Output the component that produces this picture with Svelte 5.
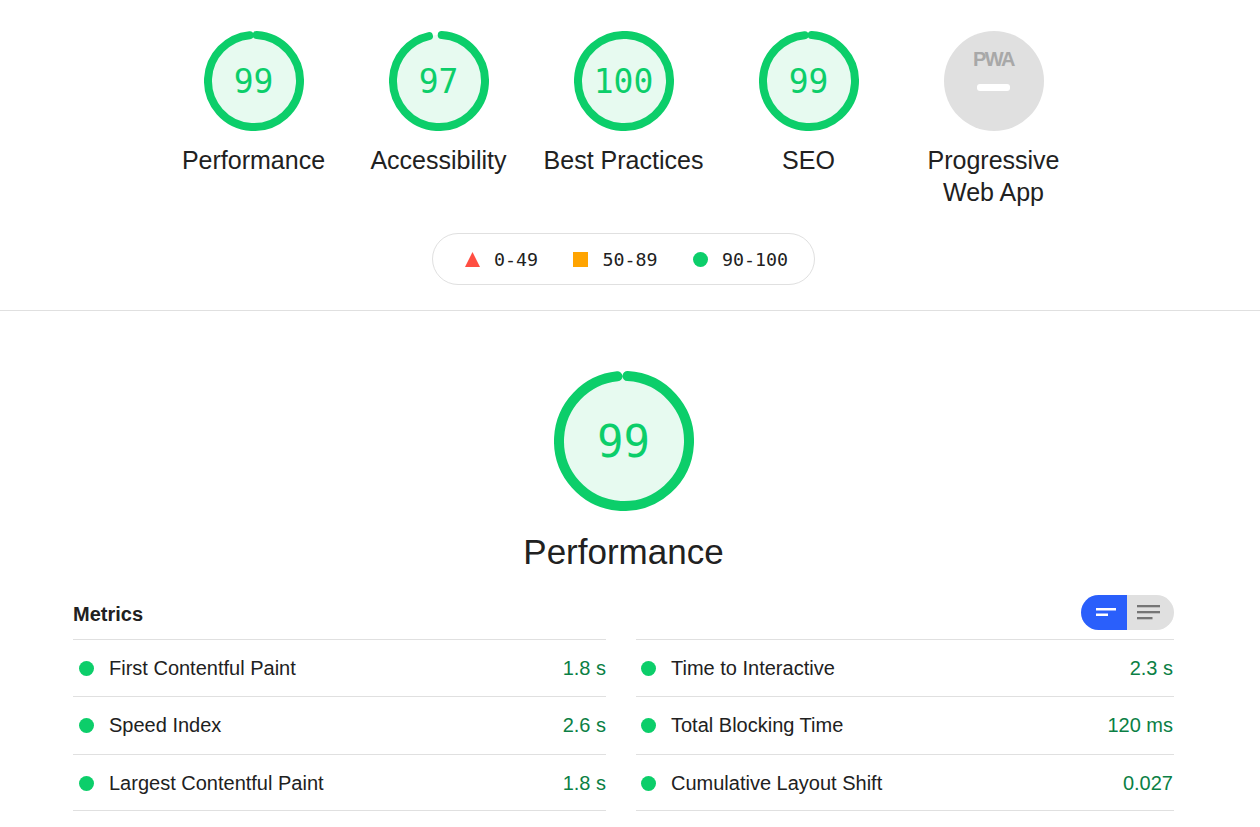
<script lang="ts">
  const cats = [
    { score: 99, label: "Performance" },
    { score: 97, label: "Accessibility" },
    { score: 100, label: "Best Practices" },
    { score: 99, label: "SEO" },
  ];
  const left = [
    { name: "First Contentful Paint", value: "1.8 s" },
    { name: "Speed Index", value: "2.6 s" },
    { name: "Largest Contentful Paint", value: "1.8 s" },
  ];
  const right = [
    { name: "Time to Interactive", value: "2.3 s" },
    { name: "Total Blocking Time", value: "120 ms" },
    { name: "Cumulative Layout Shift", value: "0.027" },
  ];

  // the round caps eat into the gap, so take their width off the dash.
  // at 99 the caps overlap a little and only a small notch stays
  function dash(score: number, r: number, stroke: number) {
    const len = 2 * Math.PI * r;
    if (score === 100) return `${len} 0`;
    const gap = Math.max(-1.5, (len * (100 - score)) / 100 - 3.3);
    return `${len - gap - stroke} ${len}`;
  }
</script>

<div class="page">
  <section class="summary">
    <div class="gauges">
      {#each cats as cat}
        <div class="gauge-item">
          <div class="gauge">
            <svg viewBox="0 0 100 100" width="100" height="100">
              <circle class="fill" cx="50" cy="50" r="46" />
              <circle
                class="arc"
                cx="50"
                cy="50"
                r="46"
                stroke-width="8"
                stroke-dasharray={dash(cat.score, 46, 8)}
                transform="rotate(-86.6 50 50)"
              />
            </svg>
            <span class="score">{cat.score}</span>
          </div>
          <div class="label">{cat.label}</div>
        </div>
      {/each}
      <div class="gauge-item">
        <div class="pwa">
          <span class="pwa-text">PWA</span>
          <span class="pwa-bar"></span>
        </div>
        <div class="label">Progressive<br />Web App</div>
      </div>
    </div>

    <div class="legend">
      <span class="legend-item">
        <svg width="15" height="15" viewBox="0 0 15 15"><polygon points="7.5,0 15,15 0,15" fill="#ff4e42" /></svg>
        0-49
      </span>
      <span class="legend-item">
        <span class="sq"></span>
        50-89
      </span>
      <span class="legend-item">
        <span class="dot"></span>
        90-100
      </span>
    </div>
  </section>

  <section class="detail">
    <div class="big-gauge">
      <svg viewBox="0 0 140 140" width="140" height="140">
        <circle class="fill" cx="70" cy="70" r="65" />
        <circle
          class="arc"
          cx="70"
          cy="70"
          r="65"
          stroke-width="10"
          stroke-dasharray={dash(99, 65, 10)}
          transform="rotate(-86.9 70 70)"
        />
      </svg>
      <span class="big-score">99</span>
    </div>
    <h2>Performance</h2>

    <div class="metrics-head">
      <span class="metrics-title">Metrics</span>
      <div class="toggle">
        <span class="toggle-on">
          <svg width="20" height="12" viewBox="0 0 20 12">
            <rect x="0" y="1" width="20" height="2.5" fill="#fff" />
            <rect x="0" y="6.5" width="12" height="2.5" fill="#fff" />
          </svg>
        </span>
        <span class="toggle-off">
          <svg width="23" height="18" viewBox="0 0 23 18">
            <rect x="0" y="1" width="23" height="2.3" fill="#757575" />
            <rect x="0" y="7" width="23" height="2.3" fill="#757575" />
            <rect x="0" y="13" width="15.5" height="2.3" fill="#757575" />
          </svg>
        </span>
      </div>
    </div>

    <div class="metrics">
      <div class="col col-left">
        {#each left as m}
          <div class="metric">
            <span class="dot"></span>
            <span class="name">{m.name}</span>
            <span class="value">{m.value}</span>
          </div>
        {/each}
      </div>
      <div class="col col-right">
        {#each right as m}
          <div class="metric">
            <span class="dot"></span>
            <span class="name">{m.name}</span>
            <span class="value">{m.value}</span>
          </div>
        {/each}
      </div>
    </div>
  </section>
</div>

<style>
  :global(body) {
    margin: 0;
    background: #fff;
    overflow: hidden;
  }
  .page {
    width: 1247px;
    color: #212121;
    font-family: "Liberation Sans", Arial, sans-serif;
  }
  .summary {
    padding-top: 31px;
    padding-bottom: 25px;
    box-sizing: border-box;
    height: 311px;
    display: flex;
    flex-direction: column;
    align-items: center;
    position: relative;
  }
  .summary::after {
    content: "";
    position: absolute;
    left: 0;
    width: 1260px;
    bottom: 0;
    height: 1px;
    background: #e0e0e0;
  }
  .gauges {
    display: flex;
    justify-content: center;
    height: 202px;
  }
  .gauge-item {
    width: 185px;
    display: flex;
    flex-direction: column;
    align-items: center;
  }
  .gauge {
    position: relative;
    width: 100px;
    height: 100px;
  }
  .gauge svg,
  .big-gauge svg {
    display: block;
  }
  .fill {
    fill: #e7faf0;
  }
  .arc {
    fill: none;
    stroke: #0cce6a;
    stroke-linecap: round;
  }
  .score,
  .big-score {
    position: absolute;
    inset: 0;
    display: flex;
    align-items: center;
    justify-content: center;
    font-family: "DejaVu Sans Mono", monospace;
    color: #0cce6a;
  }
  .score {
    font-size: 33px;
  }
  .big-score {
    font-size: 44px;
  }
  .label {
    margin-top: 13px;
    font-size: 25px;
    line-height: 32px;
    text-align: center;
    white-space: nowrap;
  }
  .pwa {
    width: 100px;
    height: 100px;
    border-radius: 50%;
    background: #e0e0e0;
    display: flex;
    flex-direction: column;
    align-items: center;
  }
  .pwa-text {
    margin-top: 18px;
    font-size: 20px;
    line-height: 20px;
    font-weight: 700;
    letter-spacing: -1.6px;
    color: #a8a8a8;
  }
  .pwa-bar {
    margin-top: 15px;
    width: 33px;
    height: 7px;
    border-radius: 3px;
    background: #fff;
  }
  .legend {
    display: flex;
    align-items: center;
    justify-content: center;
    gap: 35.5px;
    width: 383px;
    height: 52px;
    padding-left: 6px;
    box-sizing: border-box;
    border: 1px solid #e0e0e0;
    border-radius: 26px;
    font-family: "DejaVu Sans Mono", monospace;
    font-size: 18.3px;
    color: #212121;
  }
  .legend-item {
    display: flex;
    align-items: center;
    gap: 14px;
  }
  .sq {
    width: 15px;
    height: 15px;
    background: #ffa400;
  }
  .dot {
    display: inline-block;
    flex: none;
    width: 15px;
    height: 15px;
    border-radius: 50%;
    background: #0cce6a;
  }
  .detail {
    display: flex;
    flex-direction: column;
    align-items: center;
    padding-top: 60px;
  }
  .big-gauge {
    position: relative;
    width: 140px;
    height: 140px;
  }
  h2 {
    margin: 20px 0 0;
    font-size: 35px;
    line-height: 42px;
    font-weight: 400;
  }
  .metrics-head {
    width: 1101px;
    margin-top: 22px;
    height: 44px;
    display: flex;
    justify-content: space-between;
    align-items: flex-start;
  }
  .metrics-title {
    margin-top: 7px;
    font-size: 20px;
    line-height: 24px;
    font-weight: 700;
  }
  .toggle {
    display: flex;
    height: 35px;
    width: 93px;
    border-radius: 18px;
    overflow: hidden;
  }
  .toggle-on {
    width: 46px;
    background: #2a5ffb;
    display: flex;
    align-items: center;
    justify-content: center;
    padding-left: 4px;
    box-sizing: border-box;
  }
  .toggle-off {
    flex: 1;
    background: #e0e0e0;
    display: flex;
    align-items: center;
    justify-content: center;
    padding-right: 4px;
  }
  .metrics {
    width: 1101px;
    display: flex;
    gap: 30px;
    font-size: 20px;
  }
  .col-left {
    width: 533px;
  }
  .col-right {
    width: 538px;
  }
  .col {
    border-top: 1px solid #e0e0e0;
  }
  .metric {
    display: flex;
    align-items: center;
    height: 57px;
    box-sizing: border-box;
    border-bottom: 1px solid #e0e0e0;
    padding-left: 6px;
  }
  .metric:nth-child(2) {
    height: 58px;
  }
  .metric:nth-child(3) {
    height: 56px;
    padding-top: 2px;
  }
  .col-right .metric {
    padding-left: 5px;
    padding-right: 1px;
  }
  .metric .dot {
    margin-right: 15px;
  }
  .name {
    flex: 1;
    white-space: nowrap;
  }
  .value {
    color: #0b7f45;
  }
</style>
